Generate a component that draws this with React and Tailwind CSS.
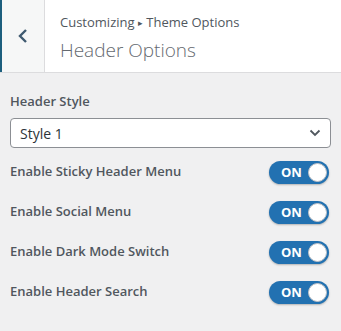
import React from "react";

const font = { fontFamily: '"Open Sans", "Noto Sans", sans-serif' };

function Toggle() {
  return (
    <div className="relative flex h-[23px] w-[60px] items-center rounded-full bg-[#2271b1] shadow-[0_1px_2px_rgba(0,0,0,0.25)]">
      <span className="pl-[12px] text-[13px] font-bold leading-none text-white">ON</span>
      <span className="absolute right-[2px] top-[2px] h-[19px] w-[19px] rounded-full border border-[#c3c4c7] bg-white" />
    </div>
  );
}

function Row({ label }) {
  return (
    <div className="flex h-[40px] items-center justify-between pr-[2px]">
      <span className="text-[13px] font-semibold text-[#50575e]">{label}</span>
      <Toggle />
    </div>
  );
}

export default function App() {
  return (
    <div className="h-[331px] w-[341px] bg-[#f0f0f1]" style={font}>
      <div className="flex h-[73px] border-b border-[#dcdcde] bg-white">
        <div className="flex w-[45px] items-center justify-center border-l-2 border-r border-l-[#1d5f7e] border-r-[#dcdcde] bg-[#f6f7f7]">
          <svg width="12" height="16" viewBox="0 0 12 16" fill="none">
            <path d="M9 2 L3 8 L9 14" stroke="#3f5a70" strokeWidth="2.4" />
          </svg>
        </div>
        <div className="flex flex-col pl-[15px] pt-[12px]">
          <div className="text-[13px] leading-[20px] text-[#50575e]">
            Customizing <span className="text-[9px] align-[1px]">▸</span> Theme Options
          </div>
          <div className="mt-[4px] text-[19px] font-light leading-[26px] text-[#646970]">Header Options</div>
        </div>
      </div>
      <div className="px-[10px] pt-[16px]">
        <div className="text-[13px] font-semibold leading-[24px] text-[#50575e]">Header Style</div>
        <div className="mt-[5px] flex h-[30px] items-center justify-between rounded-[4px] border border-[#8c8f94] bg-white pl-[9px] pr-[9px]">
          <span className="text-[14px] text-[#2c3338]">Style 1</span>
          <svg width="12" height="8" viewBox="0 0 12 8" fill="none">
            <path d="M1.5 1.5 L6 6 L10.5 1.5" stroke="#50575e" strokeWidth="1.8" />
          </svg>
        </div>
        <div className="mt-[4px]">
          <Row label="Enable Sticky Header Menu" />
          <Row label="Enable Social Menu" />
          <Row label="Enable Dark Mode Switch" />
          <Row label="Enable Header Search" />
        </div>
      </div>
    </div>
  );
}
